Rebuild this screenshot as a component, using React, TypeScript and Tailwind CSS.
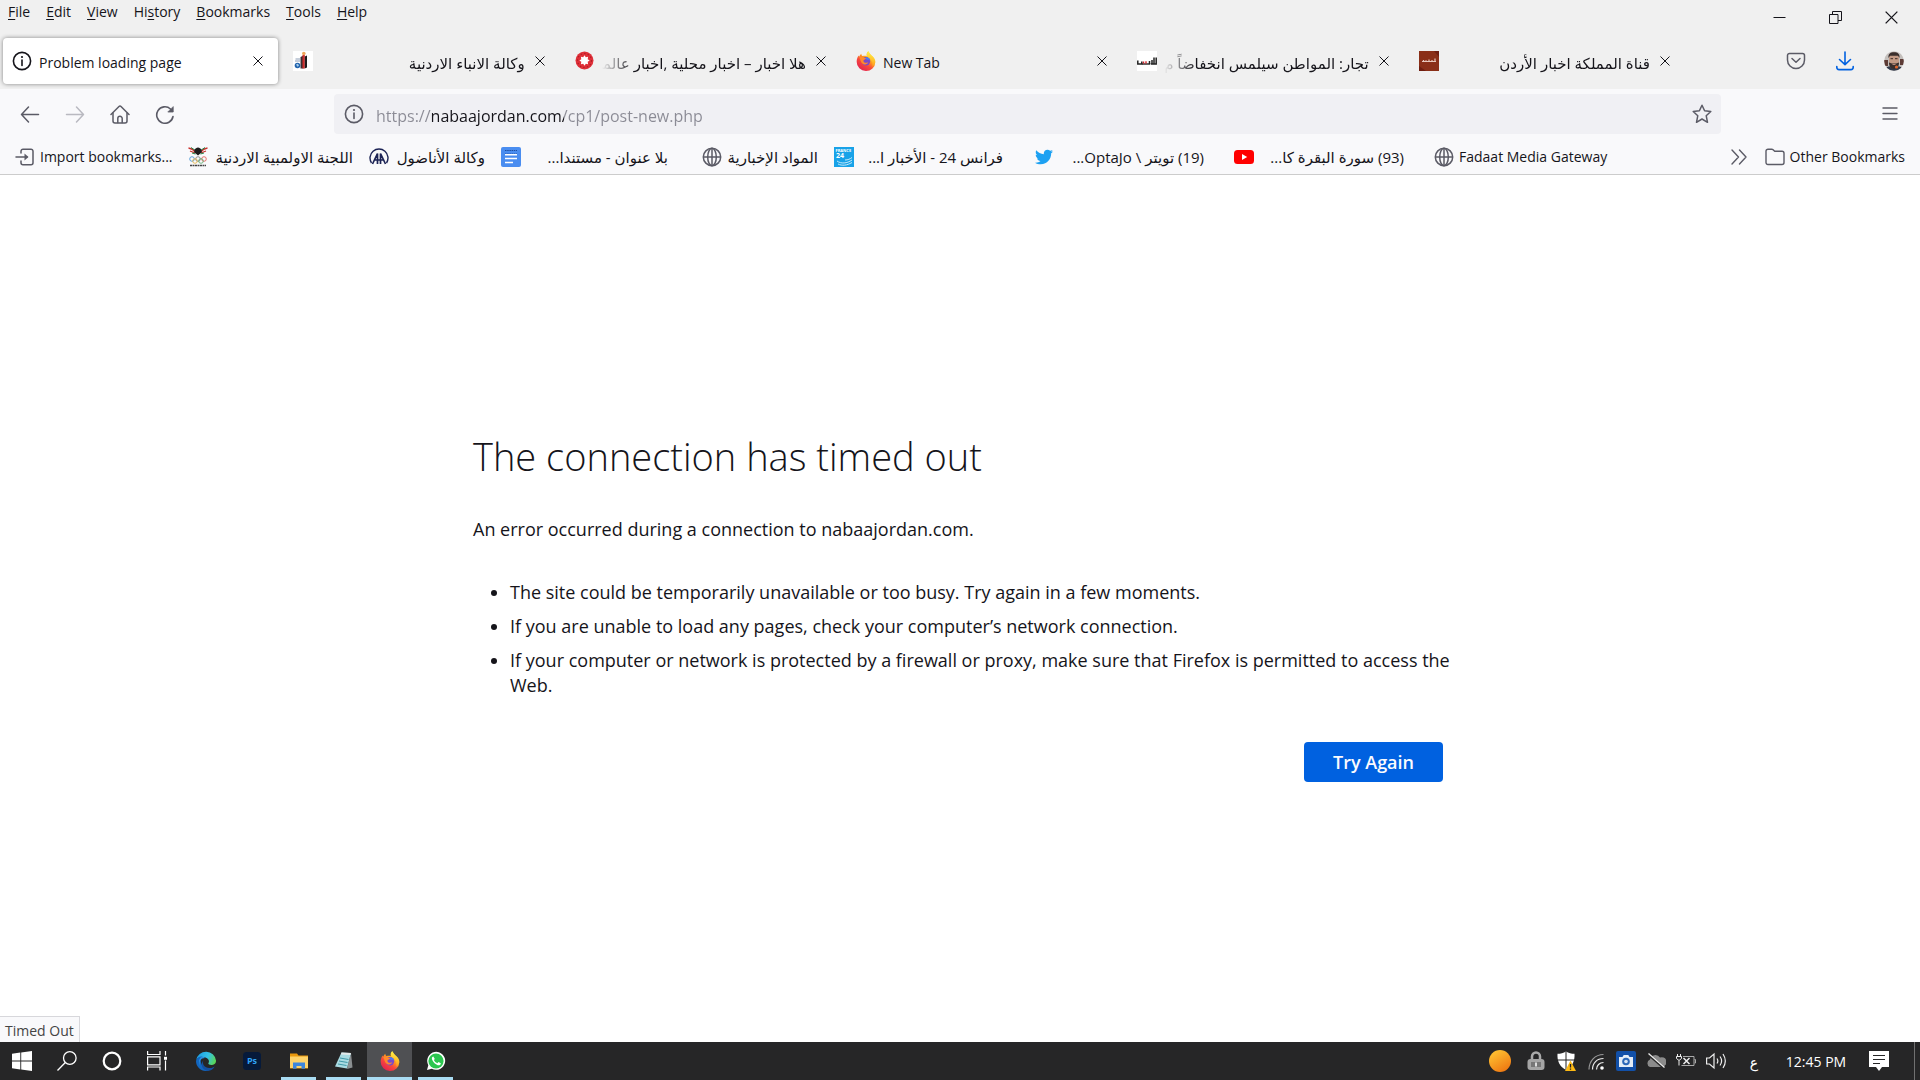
import { ReactNode } from 'react';
import { FaTwitter } from 'react-icons/fa';

interface IconProps {
  className?: string;
}

interface TabInfo {
  title: string;
  icon: ReactNode;
  rtl?: boolean;
  active?: boolean;
}

interface BookmarkInfo {
  title: string;
  icon: ReactNode;
  width: string;
  rtl?: boolean;
}

const InfoIcon = ({ className = 'size-5' }: IconProps) => (
  <svg viewBox="0 0 20 20" className={className} fill="none" stroke="currentColor" strokeWidth="1.6">
    <circle cx="10" cy="10" r="8.6" />
    <path d="M10 9v5.4" strokeLinecap="round" />
    <circle cx="10" cy="6" r="1.1" fill="currentColor" stroke="none" />
  </svg>
);

const CloseIcon = ({ className = 'size-[10px]' }: IconProps) => (
  <svg viewBox="0 0 10 10" className={className} fill="none" stroke="currentColor" strokeWidth="1">
    <path d="M0.500 0.500l9 9M9.500 0.500l-9 9" />
  </svg>
);

const GlobeIcon = () => (
  <svg viewBox="0 0 20 20" className="size-5" fill="none" stroke="#5b5b66" strokeWidth="1.500">
    <circle cx="10" cy="10" r="8.700" />
    <ellipse cx="10" cy="10" rx="4.300" ry="8.700" />
    <path d="M1.300 10h17.400M10 1.300v17.400" />
  </svg>
);

const FirefoxIcon = () => (
  <svg viewBox="0 0 20 20" className="size-5">
    <defs>
      <linearGradient id="ff-body" x1="0.85" y1="0.1" x2="0.25" y2="0.95">
        <stop offset="0.1" stopColor="#ffe226" />
        <stop offset="0.4" stopColor="#ff9a1f" />
        <stop offset="0.65" stopColor="#f8483c" />
        <stop offset="1" stopColor="#e3254f" />
      </linearGradient>
      <linearGradient id="ff-tail" x1="0.5" y1="0" x2="0.5" y2="1">
        <stop offset="0" stopColor="#fff04a" />
        <stop offset="1" stopColor="#ffa71e" stopOpacity="0.6" />
      </linearGradient>
    </defs>
    <path
      d="M12.300 0.200c1 1.300 1.300 2.500 3.200 4.200C18 6.400 19.500 8.500 19.300 11.200A9.300 8.800 0 0 1 0.700 11C0.600 8.600 1.200 6.600 2.600 4.500c0.200 0.700 0.400 1 0.700 1.300C3.700 4.500 4.200 3.500 5.300 2.700c0 1 0.300 1.700 1 2.300 2.200-0.300 3.100-0.500 4.500 0.200C10.200 3.200 10.700 1.500 12.300 0.200z"
      fill="url(#ff-body)"
    />
    <path
      d="M12.300 0.200c1 1.300 1.300 2.500 3.200 4.200C18 6.400 19.500 8.500 19.200 11.200c-0.300 2-1.500 3.700-3 4.300C17.300 11.500 15 8 12.800 7.200 10.600 5.500 10.300 2.200 12.300 0.200z"
      fill="url(#ff-tail)"
    />
    <circle cx="10" cy="10.300" r="4.200" fill="#7a49c9" />
    <path d="M9.500 6.200c2.500-0.400 4.500 1.300 4.700 3.500-1.200-1.200-2.500-1-3.500-0.600z" fill="#4a7ff0" />
    <path d="M3.300 5.800c1.500-0.700 3-0.300 4 0.800l2.700 0.700c0 1-1.700 1.300-2.400 2-0.500 1 0.300 2.300 1.700 2.500 1.300 0.200 1.900-0.700 3-0.200-0.800 1.800-3.300 2.400-5.300 1.300C4.800 11.700 4.300 8.600 3.300 5.800z" fill="#ff8a2a" />
  </svg>
);

const PetraIcon = () => (
  <svg viewBox="0 0 20 20" className="size-5">
    <path d="M0 0h20v20H0z" fill="#fff" />
    <path d="M7.500 6l3-1.500v13h-3z" fill="#3a2d31" />
    <path d="M9.500 4h2.300v13.500H9.500z" fill="#cf2a2b" />
    <path d="M11.800 5.500L14 4.500v12l-2.200 1z" fill="#1d1a1c" />
    <circle cx="10.800" cy="2.500" r="1.800" fill="#f0a65a" />
    <path d="M2.500 8h4.500M2 10h5.500" stroke="#8b9cb5" />
    <circle cx="4.500" cy="14.500" r="2.800" fill="#2263ad" />
    <path d="M3 13.500l2-0.800 1 2-1.500 1z" fill="#a5cdea" />
  </svg>
);

const HalaIcon = () => (
  <svg viewBox="0 0 20 20" className="size-5">
    <circle cx="9.500" cy="9.500" r="9" fill="#df2f38" />
    <circle cx="9.500" cy="9.500" r="7" fill="none" stroke="#b01c26" strokeWidth="1.200" strokeDasharray="1.400 2.200" />
    <path d="M9.500 4.300l1.300 2 2.300-0.500-0.400 2.400 2 1.300-2 1.300 0.400 2.400-2.300-0.500-1.300 2-1.300-2-2.300 0.500 0.400-2.400-2-1.300 2-1.300-0.400-2.400 2.300 0.500z" fill="#fff" />
  </svg>
);

const SabeelIcon = () => (
  <svg viewBox="0 0 20 20" className="size-5">
    <path d="M0 0h20v20H0z" fill="#fff" />
    <path d="M0.800 9.500v3.500h4v-2.500M19.200 6.500v6.500h-5.500M17 6.500v6M15 9v3.500M12.500 10v3" fill="none" stroke="#222" strokeWidth="1.500" />
    <path d="M5 13h8" stroke="#222" strokeWidth="1.400" />
    <path d="M6.500 12.500V10.500M9 12.500v-2.200" stroke="#d8262d" strokeWidth="1.400" />
  </svg>
);

const MamlakaIcon = () => (
  <svg viewBox="0 0 20 20" className="size-5">
    <path d="M0 0h20v20H0z" fill="#8a2f18" />
    <path d="M0 15l7 5H0zM15 0h5v6z" fill="#6f1e10" />
    <path d="M3 10.500h14M4.500 10.500V9M7 10.500v-1.300M10 10.500V8.500M13 10.500V9M16 10.500V7.500" stroke="#e8c8bc" strokeWidth="1.200" />
  </svg>
);

const ImportIcon = () => (
  <svg viewBox="0 0 20 20" className="size-5" fill="none" stroke="#5b5b66" strokeWidth="1.500" strokeLinecap="round" strokeLinejoin="round">
    <path d="M6 6V4.200A2 2 0 0 1 8 2.200h8a2 2 0 0 1 2 2v11.600a2 2 0 0 1-2 2H8a2 2 0 0 1-2-2V14" />
    <path d="M1 10h11" />
    <path d="M9.500 6.500l4 3.500-4 3.500z" fill="#5b5b66" stroke="none" />
  </svg>
);

const OlympicIcon = () => (
  <svg viewBox="0 0 20 20" className="size-5">
    <path d="M0.500 1c3 0.500 5 1.500 6.500 3.500M19.500 1c-3 0.500-5 1.500-6.500 3.500M2 4l5 2M18 4l-5 2" stroke="#c9302c" strokeWidth="1.300" fill="none" />
    <path d="M3 0.500l4.500 3M17 0.500l-4.500 3M4 6l3.500 1M16 6l-3.500 1" stroke="#238a4b" fill="none" />
    <path d="M10 0.500c3 0.500 4.500 3 3.500 5L10 8.500 6.500 5.500C5.500 3.500 7 1 10 0.500z" fill="#1c1c1c" />
    <g fill="none" strokeWidth="0.800">
      <circle cx="4" cy="12" r="2.300" stroke="#3a8dd0" />
      <circle cx="10" cy="12" r="2.300" stroke="#777" />
      <circle cx="16" cy="12" r="2.300" stroke="#e0524a" />
      <circle cx="7" cy="14" r="2.300" stroke="#e6b13c" />
      <circle cx="13" cy="14" r="2.300" stroke="#55a868" />
    </g>
    <path d="M2 18.500h16" stroke="#444" strokeWidth="1.600" strokeDasharray="2 0.500" />
  </svg>
);

const AnadoluIcon = () => (
  <svg viewBox="0 0 20 20" className="size-5" fill="none" stroke="#1c2355">
    <path d="M2.500 16a9 9 0 1 1 15 0" strokeWidth="1.400" />
    <path d="M3.500 17l5-10.500V17M11.500 17V6.500l5 10.500M6 13h8" strokeWidth="1.700" />
  </svg>
);

const DocsIcon = () => (
  <svg viewBox="0 0 20 20" className="size-5">
    <rect width="20" height="20" rx="2" fill="#4a8df0" />
    <path d="M4 3.500h12M4 7h12" stroke="#1f4fa0" strokeWidth="1.200" strokeDasharray="1.500 0.700" />
    <path d="M4 7.800h12M4 11.500h12M4 15.500h8" stroke="#fff" strokeWidth="1.600" />
  </svg>
);

const FranceIcon = () => (
  <svg viewBox="0 0 20 20" className="size-5">
    <path d="M0 0h20v20H0z" fill="#18a2e8" />
    <text x="1.500" y="4.800" fontSize="4" fontWeight="700" fill="#fff" fontFamily="Open Sans, sans-serif">
      FRANCE
    </text>
    <text x="2" y="11" fontSize="7" fontWeight="700" fill="#fff" fontFamily="Open Sans, sans-serif">
      24
    </text>
    <path d="M3 14c4 3 10 2.500 15-1M4 17c4 2 9 1.500 14-1.500M11 13c3 0 5-1 7-2.500" stroke="#d8f0fc" strokeWidth="0.900" fill="none" />
  </svg>
);

const YoutubeIcon = () => (
  <svg viewBox="0 0 20 20" className="size-5">
    <rect y="3" width="20" height="14" rx="3.500" fill="#f00" />
    <path d="M8 7v6l5.200-3z" fill="#fff" />
  </svg>
);

const FolderIcon = () => (
  <svg viewBox="0 0 20 20" className="size-5" fill="none" stroke="#5b5b66" strokeWidth="1.400" strokeLinejoin="round">
    <path d="M1 4.200a2 2 0 0 1 2-2h3.800a2 2 0 0 1 1.300 0.500l1.600 1.600h7.300a2 2 0 0 1 2 2v9.200a2 2 0 0 1-2 2H3a2 2 0 0 1-2-2z" />
  </svg>
);

const AvatarIcon = () => (
  <svg viewBox="0 0 20 20" className="size-5">
    <defs>
      <clipPath id="avatar-clip">
        <circle cx="10" cy="10" r="9.800" />
      </clipPath>
    </defs>
    <g clipPath="url(#avatar-clip)">
      <path d="M0 0h20v20H0z" fill="#c4bfbc" />
      <path d="M0 9h4v6H0zM16 8h4v6h-4z" fill="#5d3b35" />
      <path d="M0 20c1-4 4-5 10-5s9 1 10 5z" fill="#32394a" />
      <path d="M5 6c0-3 2-4.500 5-4.500S15 3 15 6v6c0 3-2 5.500-5 5.500S5 15 5 12z" fill="#c39a85" />
      <path d="M4.500 7C4 3 6 1.200 10 1.200S16 3 15.500 7L14 4.800H6zM5 11.500l3 1h4l3-1c0 4-2 6.500-5 6.500s-5-2.500-5-6.500z" fill="#3a2f2d" />
      <path d="M6.500 7.700h2.500M11 7.700h2.500" stroke="#3a2a26" />
      <path d="M8.500 13.500h3" stroke="#b98a78" />
      <circle cx="12.500" cy="16" r="1.600" fill="#e0662a" />
    </g>
  </svg>
);

const tabs: TabInfo[] = [
  { title: 'Problem loading page', icon: <InfoIcon />, active: true },
  { title: 'وكالة الانباء الاردنية', icon: <PetraIcon />, rtl: true },
  { title: 'هلا اخبار – اخبار محلية ,اخبار عالمي', icon: <HalaIcon />, rtl: true },
  { title: 'New Tab', icon: <FirefoxIcon /> },
  { title: 'تجار: المواطن سيلمس انخفاضاً م', icon: <SabeelIcon />, rtl: true },
  { title: 'قناة المملكة اخبار الأردن', icon: <MamlakaIcon />, rtl: true }
];

const bookmarks: BookmarkInfo[] = [
  { title: 'Import bookmarks...', icon: <ImportIcon />, width: 'w-[173px]' },
  { title: 'اللجنة الاولمبية الاردنية', icon: <OlympicIcon />, width: 'w-[181px] pr-4', rtl: true },
  { title: 'وكالة الأناضول', icon: <AnadoluIcon />, width: 'w-[132px] pr-4', rtl: true },
  { title: 'بلا عنوان - مستندا...', icon: <DocsIcon />, width: 'w-[201px] pr-[34px]', rtl: true },
  { title: 'المواد الإخبارية', icon: <GlobeIcon />, width: 'w-[132px] pr-4', rtl: true },
  { title: 'فرانس 24 - الأخبار ا...', icon: <FranceIcon />, width: 'w-[200px] pr-[31px]', rtl: true },
  {
    title: '(19) تويتر \\ OptaJo...',
    icon: <FaTwitter className="size-5 p-px text-[#1da1f2]" />,
    width: 'w-[200px] pr-[30px]',
    rtl: true
  },
  { title: '(93) سورة البقرة كا...', icon: <YoutubeIcon />, width: 'w-[200px] pr-[30px]', rtl: true },
  { title: 'Fadaat Media Gateway', icon: <GlobeIcon />, width: 'w-[182px]' }
];

// [before, access key, after]
const menus = [
  ['', 'F', 'ile'],
  ['', 'E', 'dit'],
  ['', 'V', 'iew'],
  ['Hi', 's', 'tory'],
  ['', 'B', 'ookmarks'],
  ['', 'T', 'ools'],
  ['', 'H', 'elp']
];

const TitleBar = () => (
  <div className="flex h-[34px] items-start justify-between">
    <nav className="flex h-6 items-center gap-4 pl-2 text-sm">
      {menus.map(([before, key, after]) => (
        <button key={key} type="button">
          {before}
          <span className="underline underline-offset-2">{key}</span>
          {after}
        </button>
      ))}
    </nav>
    <div className="flex h-[34px] items-center pr-px text-[#15141a]">
      <button type="button" aria-label="Minimize" className="flex w-14 justify-center">
        <svg viewBox="0 0 13 13" className="size-[13px]" stroke="currentColor">
          <path d="M0.500 6.500h12" />
        </svg>
      </button>
      <button type="button" aria-label="Restore" className="flex w-14 justify-center">
        <svg viewBox="0 0 13 13" className="size-[13px]" fill="none" stroke="currentColor">
          <path d="M0.500 3.500h8.500v9h-8.500zM3.500 3.500v-3h9v9h-3.500" />
        </svg>
      </button>
      <button type="button" aria-label="Close window" className="flex w-14 justify-center">
        <CloseIcon className="size-[13px]" />
      </button>
    </div>
  </div>
);

const Tab = ({ title, icon, rtl, active }: TabInfo) => (
  <div
    className={`mx-[3px] flex min-w-0 flex-1 items-center rounded pr-[15px] pl-[9px] ${
      active ? 'bg-white shadow-[0_0_4px_rgba(0,0,0,0.45)]' : ''
    }`}
  >
    <button type="button" className="flex min-w-0 flex-1 items-center gap-[7px] self-stretch">
      <span className="shrink-0">{icon}</span>
      <span
        dir={rtl ? 'rtl' : 'ltr'}
        className={`min-w-0 flex-1 overflow-hidden pt-1 text-start whitespace-nowrap ${
          rtl
            ? 'text-[15px] [mask-image:linear-gradient(to_right,transparent,black_32px)]'
            : 'text-sm'
        }`}
      >
        {title}
      </span>
    </button>
    <button type="button" aria-label={`Close ${title}`} className="ml-[10px] shrink-0">
      <CloseIcon />
    </button>
  </div>
);

const TabStrip = () => (
  <div className="flex h-[55px] pt-1 pb-[5px]">
    <div className="flex min-w-0 flex-1">
      {tabs.map((tab) => (
        <Tab key={tab.title} {...tab} />
      ))}
    </div>
    <div className="flex w-[232px] shrink-0 items-center justify-end gap-[29px] pr-4">
      <button type="button" aria-label="Save to Pocket">
        <svg viewBox="0 0 20 20" className="size-5" fill="none" stroke="#5b5b66" strokeWidth="1.500" strokeLinecap="round" strokeLinejoin="round">
          <path d="M3.500 2.500h13a2 2 0 0 1 2 2v4.500a8.500 8.500 0 0 1-17 0V4.500a2 2 0 0 1 2-2z" />
          <path d="M6 7.500l4 3.800 4-3.800" />
        </svg>
      </button>
      <button type="button" aria-label="Downloads">
        <svg viewBox="0 0 20 20" className="size-5" fill="none" stroke="#0061e0" strokeWidth="1.600" strokeLinecap="round" strokeLinejoin="round">
          <path d="M10 1v12.500M4.500 8.500L10 13.700l5.500-5.200M1.800 15.500v0.800a2.300 2.300 0 0 0 2.300 2.300h11.800a2.300 2.300 0 0 0 2.300-2.300v-0.800" />
        </svg>
      </button>
      <button type="button" aria-label="Account">
        <AvatarIcon />
      </button>
    </div>
  </div>
);

const NavBar = () => (
  <div className="flex h-[50px] items-center bg-[#f9f9fb] pr-[22px] pl-5 text-[#5b5b66]">
    <div className="flex w-[314px] shrink-0 items-center gap-[25px]">
      <button type="button" aria-label="Back">
        <svg viewBox="0 0 20 20" className="size-5" fill="none" stroke="currentColor" strokeWidth="1.500" strokeLinecap="round" strokeLinejoin="round">
          <path d="M18.500 10.500H1.500M8.500 3L1.500 10.500l7 7.500" />
        </svg>
      </button>
      <button type="button" aria-label="Forward" disabled className="text-[#b9b9c0]">
        <svg viewBox="0 0 20 20" className="size-5" fill="none" stroke="currentColor" strokeWidth="1.500" strokeLinecap="round" strokeLinejoin="round">
          <path d="M1.500 10.500h17M11.500 3l7 7.500-7 7.500" />
        </svg>
      </button>
      <button type="button" aria-label="Home">
        <svg viewBox="0 0 20 20" className="size-5" fill="none" stroke="currentColor" strokeWidth="1.500" strokeLinecap="round" strokeLinejoin="round">
          <path d="M1 10.500l8-8a1.400 1.400 0 0 1 2 0l8 8" />
          <path d="M3 9v8a2 2 0 0 0 2 2h10a2 2 0 0 0 2-2V9" />
          <path d="M7.800 18.500v-4a2.200 2.200 0 0 1 4.400 0v4" />
        </svg>
      </button>
      <button type="button" aria-label="Reload">
        <svg viewBox="0 0 20 20" className="size-5" fill="none" stroke="currentColor" strokeWidth="1.600" strokeLinecap="round" strokeLinejoin="round">
          <path d="M18 12.500a8.200 8.200 0 1 1-2.500-7.500l1.500 1.500" />
          <path d="M18.200 3v5h-5z" fill="currentColor" strokeWidth="0.800" />
        </svg>
      </button>
    </div>
    <div className="flex h-10 min-w-0 flex-1 items-center rounded bg-[#f0f0f4] pr-[9px] pl-[10px]">
      <InfoIcon />
      <input
        type="text"
        aria-label="Address"
        defaultValue="https://nabaajordan.com/cp1/post-new.php"
        className="ml-3 min-w-0 flex-1 bg-[linear-gradient(to_right,#8b8b95_56px,#15141a_56px,#15141a_188px,#8b8b95_188px)] bg-clip-text pt-[3px] text-base text-transparent outline-none"
      />
      <button type="button" aria-label="Bookmark this page">
        <svg viewBox="0 0 20 20" className="size-5" fill="none" stroke="currentColor" strokeWidth="1.500" strokeLinejoin="round">
          <path d="M10 1.200l2.600 5.600 6.200 0.700-4.600 4.200 1.300 6.600L10 15l-5.500 3.300 1.300-6.600L1.200 7.500l6.200-0.700z" />
        </svg>
      </button>
    </div>
    <div className="flex w-[177px] shrink-0 justify-end">
      <button type="button" aria-label="Open application menu">
        <svg viewBox="0 0 16 16" className="size-4" stroke="currentColor" strokeWidth="1.400" strokeLinecap="round">
          <path d="M1 2h14M1 7.500h14M1 13h14" />
        </svg>
      </button>
    </div>
  </div>
);

const BookmarksBar = () => (
  <div className="flex h-9 items-center border-b border-[#cccccc] bg-[#f9f9fb] pr-[15px] pl-[15px]">
    <div className="flex min-w-0 flex-1 overflow-hidden">
      {bookmarks.map(({ title, icon, width, rtl }) => (
        <a
          key={title}
          href="#"
          className={`flex shrink-0 items-center gap-[5px] whitespace-nowrap ${width}`}
        >
          <span className="shrink-0">{icon}</span>
          <span
            dir={rtl ? 'rtl' : 'ltr'}
            className={`flex-1 pt-px text-start leading-5 ${rtl ? 'text-[15px]' : 'text-sm'}`}
          >
            {title}
          </span>
        </a>
      ))}
    </div>
    <button type="button" aria-label="Show more bookmarks" className="mr-[18px]">
      <svg viewBox="0 0 16 16" className="size-4" fill="none" stroke="#5b5b66" strokeWidth="1.400" strokeLinecap="round" strokeLinejoin="round">
        <path d="M1 1l6.500 7L1 15M8.500 1l6.500 7-6.500 7" />
      </svg>
    </button>
    <button type="button" className="flex items-center gap-[5px] text-sm whitespace-nowrap">
      <FolderIcon />
      <span className="pt-px">Other Bookmarks</span>
    </button>
  </div>
);

const ErrorPage = () => (
  <main className="relative flex flex-1 items-center justify-center bg-white pr-[52px] pb-1 pl-12 text-[#15141a]">
    <div className="w-full max-w-[970px]">
      <h1 className="text-[38px] leading-[50px] font-light">The connection has timed out</h1>
      <p className="mt-9 text-lg leading-[25px]">An error occurred during a connection to nabaajordan.com.</p>
      <ul className="mt-[38px] -mr-4 list-disc space-y-[9px] pl-[37px] text-lg leading-[25px]">
        <li>The site could be temporarily unavailable or too busy. Try again in a few moments.</li>
        <li>If you are unable to load any pages, check your computer’s network connection.</li>
        <li>
          If your computer or network is protected by a firewall or proxy, make sure that Firefox is
          permitted to access the Web.
        </li>
      </ul>
      <div className="mt-11 flex justify-end">
        <button type="button" className="h-10 w-[139px] rounded bg-[#0061e0] text-lg font-semibold text-[#fbfbfe]">
          Try Again
        </button>
      </div>
    </div>
    <div className="absolute bottom-0 left-0 h-[26px] border-t border-r border-[#d7d7db] bg-[#f9f9fb] px-[5px] text-sm leading-[28px] text-[#444]">
      Timed Out
    </div>
  </main>
);

const apps: { name: string; icon: ReactNode; className: string }[] = [
  {
    name: 'Start',
    className: 'w-11',
    icon: (
      <svg viewBox="0 0 20 20" className="size-5" fill="#fff">
        <path d="M0 2.800l8.300-1.200v8H0zM9.200 1.500L20 0v9.600H9.200zM0 10.500h8.300v8L0 17.300zM9.200 10.500H20V20L9.200 18.500z" />
      </svg>
    )
  },
  {
    name: 'Search',
    className: 'w-[45px]',
    icon: (
      <svg viewBox="0 0 20 20" className="size-5" fill="none" stroke="#fff" strokeWidth="1.300">
        <circle cx="12.800" cy="7" r="6.300" />
        <path d="M8.300 11.500L0.500 19.500" />
      </svg>
    )
  },
  {
    name: 'Cortana',
    className: 'w-[45px]',
    icon: (
      <svg viewBox="0 0 20 20" className="size-5" fill="none" stroke="#fff" strokeWidth="2.200">
        <circle cx="10" cy="10" r="8.300" />
      </svg>
    )
  },
  {
    name: 'Task view',
    className: 'w-[45px]',
    icon: (
      <svg viewBox="0 0 20 20" className="size-5" fill="none" stroke="#fff" strokeWidth="1.200">
        <path d="M0.600 0v3.500h12.400V0M0.600 5.800h12.400v8H0.600zM0.600 19.500V16h12.400v3.500M18.500 0v4.500M18.500 9.500v10" />
        <path d="M17 5.800h3v3h-3z" fill="#fff" stroke="none" />
      </svg>
    )
  },
  {
    name: 'Edge',
    className: 'ml-1 w-[46px]',
    icon: (
      <svg viewBox="0 0 20 20" className="size-5">
        <defs>
          <linearGradient id="edge-top" x1="0" y1="0.300" x2="1" y2="0.600">
            <stop offset="0" stopColor="#1b9de2" />
            <stop offset="0.550" stopColor="#34c1e6" />
            <stop offset="1" stopColor="#5ad755" />
          </linearGradient>
        </defs>
        <path d="M0.200 9A10 10 0 0 1 20 9.500c0.200 3-2 4.500-4.500 4.500-2.500 0-3.700-1-3-2 1-1.500 0.500-4.500-3-5.500C6 5.500 2 6 0.200 9z" fill="url(#edge-top)" />
        <path d="M0 10c0.500-3.500 3.500-5 6.500-4.500C3 7 4.500 17.500 13 19.500 6 21.500 0 16.500 0 10z" fill="#1266c0" />
        <path d="M7.500 9c-2 4 1.500 8.500 6.500 8 2 0 3.500-0.600 4.800-1.500-1.600 2.700-4 4.200-6.800 4.500-5-0.500-8.500-6-4.500-11z" fill="#1450a0" />
        <path d="M6.500 5.500C3 6.500 2 11 4 15c-1.500-5 1-8 5-8 0 0-1-1.500-2.500-1.500z" fill="#2a8fdf" />
      </svg>
    )
  },
  {
    name: 'Photoshop',
    className: 'w-[46px]',
    icon: (
      <svg viewBox="0 0 20 20" className="size-5">
        <rect x="1" y="1" width="18" height="18" rx="3.500" fill="#061a3a" />
        <text x="10" y="13" textAnchor="middle" fontSize="9" fontWeight="700" fill="#2fa3f7" fontFamily="Open Sans, sans-serif">
          Ps
        </text>
      </svg>
    )
  },
  {
    name: 'File Explorer',
    className: 'mr-[5px] ml-[6px] w-[35px] border-b-[3px] border-[#a9dcf3]',
    icon: (
      <svg viewBox="0 0 20 20" className="size-5">
        <path d="M1 2.500h7l1.500 2H19v13H1z" fill="#e9980c" />
        <path d="M1 5.500h18V17H1z" fill="#fdd269" />
        <path d="M4 17.800v-6.300h12v6.300h-3.500V15h-5v2.800z" fill="#3c86dd" />
      </svg>
    )
  },
  {
    name: 'Notepad',
    className: 'mx-[5px] w-[35px] border-b-[3px] border-[#a9dcf3]',
    icon: (
      <svg viewBox="0 0 20 20" className="size-5">
        <path d="M17 2l1.500 14.500L13 18z" fill="#8a8f91" />
        <path d="M7.500 1.500L17 2l-4 15.500-12-2z" fill="#a9dbe2" />
        <path d="M7.500 1.500L17 2l-0.500 2L7 3.500z" fill="#e4e9ea" />
        <path d="M6 7l8.500 1.500M5 10l8.500 1.500M4 13l8.500 1.500" stroke="#3f99a9" />
      </svg>
    )
  },
  {
    name: 'Firefox',
    className: 'ml-px w-[45px] border-b-[3px] border-[#a9dcf3] bg-[#4f5053]',
    icon: <FirefoxIcon />
  },
  {
    name: 'WhatsApp',
    className: 'ml-[6px] w-[35px] border-b-[3px] border-[#a9dcf3]',
    icon: (
      <svg viewBox="0 0 20 20" className="size-5">
        <path d="M1 19l1.300-4.800A9 9 0 1 1 5.800 17.700z" fill="#fff" />
        <circle cx="10" cy="10" r="7.600" fill="#2bc64f" />
        <path d="M7.300 5.500c-1.500 0.400-1.800 2-1 3.500 1.200 2.500 3 4.200 5.500 5.200 1.500 0.500 2.900-0.300 3-2l-2.300-1.200-1.200 1.200c-1.700-0.700-2.700-1.700-3.400-3.200l0.900-1z" fill="#fff" />
      </svg>
    )
  }
];

const tray: { name: string; icon: ReactNode }[] = [
  {
    name: 'Locked',
    icon: (
      <svg viewBox="0 0 20 20" className="size-5">
        <path d="M6 9V5.500a4 4 0 0 1 8 0V9" fill="none" stroke="#aaa" strokeWidth="2.500" />
        <rect x="1.500" y="8" width="17" height="11" rx="3" fill="#a5a5a5" />
        <path d="M5 11h10v5H5z" fill="#777" />
        <path d="M10 11.500v4" stroke="#ddd" strokeWidth="2" />
      </svg>
    )
  },
  {
    name: 'Windows Security',
    icon: (
      <svg viewBox="0 0 20 20" className="size-5">
        <path d="M10 0.500c2.500 1.700 5.500 2.300 8.500 2.300 0.500 7-2 13-8.500 16.200C3.500 15.800 1 9.800 1.500 2.800c3 0 6-0.600 8.500-2.300z" fill="#fff" />
        <path d="M10 0.500v18.500M1.500 9h17" stroke="#222" />
        <path d="M14.500 9.500L20 20H9z" fill="#fdb913" />
        <path d="M14.500 13v3.500M14.500 17.500v1.300" stroke="#222" strokeWidth="1.300" />
      </svg>
    )
  },
  {
    name: 'Network',
    icon: (
      <svg viewBox="0 0 20 20" className="size-5" fill="none" stroke="#eee" strokeWidth="1.200">
        <path d="M3 18.500C3 10 9 3.500 17.500 3.500" stroke="#999" />
        <path d="M6.500 18.500C6.500 12 11 7.500 17.500 7.500M10.500 18.500c0-4 3-7 7-7" />
        <circle cx="16" cy="17" r="1.800" fill="#fff" stroke="none" />
      </svg>
    )
  },
  {
    name: 'Screen capture',
    icon: (
      <svg viewBox="0 0 20 20" className="size-5">
        <rect width="20" height="20" rx="2" fill="#1250a8" />
        <path d="M3 6h3.500l1.200-2h4.600l1.200 2H17v10H3z" fill="#e4edf7" />
        <circle cx="10" cy="10.500" r="3.800" fill="#2b67b8" />
        <circle cx="10" cy="10.500" r="1.800" fill="#d5e2f2" />
      </svg>
    )
  },
  {
    name: 'OneDrive',
    icon: (
      <svg viewBox="0 0 20 20" className="size-5">
        <path d="M4 16a4 4 0 0 1 0-7.500A5.500 5.500 0 0 1 14 6.500 4.500 4.500 0 0 1 17.500 15.500L16 16z" fill="#8b8b8b" />
        <path d="M2 3l16 14" stroke="#272727" strokeWidth="2.500" />
        <path d="M2.500 2.500l16 14" stroke="#eee" strokeWidth="1.300" />
      </svg>
    )
  },
  {
    name: 'Battery',
    icon: (
      <svg viewBox="0 0 20 20" className="size-5" fill="none" stroke="#eee">
        <path d="M7 5.500h11v9H5.500M18.500 8.500h1v3.500h-1" stroke="#aaa" />
        <path d="M7.500 7l6 6M13.500 7l-6 6" strokeWidth="1.500" />
        <path d="M1.500 3v2.500M4.500 3v2.500M0.500 5.500h5v2l-2.500 2-2.500-2zM3 9.500v5" />
      </svg>
    )
  },
  {
    name: 'Volume',
    icon: (
      <svg viewBox="0 0 20 20" className="size-5" fill="none" stroke="#eee" strokeWidth="1.200">
        <path d="M0.600 7v6h2.900l4.500 4V3L3.500 7z" />
        <path d="M11 7.500c1 1.500 1 3.500 0 5M14 5.500c2 2.800 2 6.200 0 9M17 3c3 4.500 3 9.500 0 14" />
      </svg>
    )
  }
];

const Taskbar = () => (
  <footer className="flex h-[38px] shrink-0 items-stretch justify-between bg-[#262627] text-white">
    <div className="flex">
      {apps.map(({ name, icon, className }) => (
        <button
          key={name}
          type="button"
          aria-label={name}
          className={`flex shrink-0 justify-center pt-[9px] ${className}`}
        >
          {icon}
        </button>
      ))}
    </div>
    <div className="flex items-center">
      <button type="button" aria-label="Weather" className="mr-[15px]">
        <svg viewBox="0 0 22 22" className="size-[22px]">
          <defs>
            <linearGradient id="sun" x1="0.200" y1="0" x2="0.800" y2="1">
              <stop offset="0" stopColor="#ffc533" />
              <stop offset="1" stopColor="#ee7410" />
            </linearGradient>
          </defs>
          <circle cx="11" cy="11" r="11" fill="url(#sun)" />
        </svg>
      </button>
      <div className="flex gap-[10px]">
        {tray.map(({ name, icon }) => (
          <button key={name} type="button" aria-label={name}>
            {icon}
          </button>
        ))}
      </div>
      <button type="button" aria-label="Keyboard language" className="ml-[22px] w-3 pt-1 text-sm">
        ع
      </button>
      <button type="button" className="ml-6 w-[64px] pt-0.5 text-sm whitespace-nowrap">
        12:45 PM
      </button>
      <button type="button" aria-label="Notifications" className="ml-[21px]">
        <svg viewBox="0 0 20 20" className="size-5">
          <path d="M0 0h20v16h-7l-3 4-3-4H0z" fill="#fff" />
          <path d="M4 4.500h12M4 8.500h12M4 12.500h7" stroke="#262627" />
        </svg>
      </button>
      <div className="mr-[5px] ml-[25px] w-px self-stretch bg-[#707070]" />
    </div>
  </footer>
);

const App = () => (
  <div className="flex min-h-screen flex-col bg-[#f0f0f0] font-['Open_Sans','Noto_Sans','DejaVu_Sans',sans-serif] text-[#15141a]">
    <header>
      <TitleBar />
      <TabStrip />
      <NavBar />
      <BookmarksBar />
    </header>
    <ErrorPage />
    <Taskbar />
  </div>
);

export default App;
